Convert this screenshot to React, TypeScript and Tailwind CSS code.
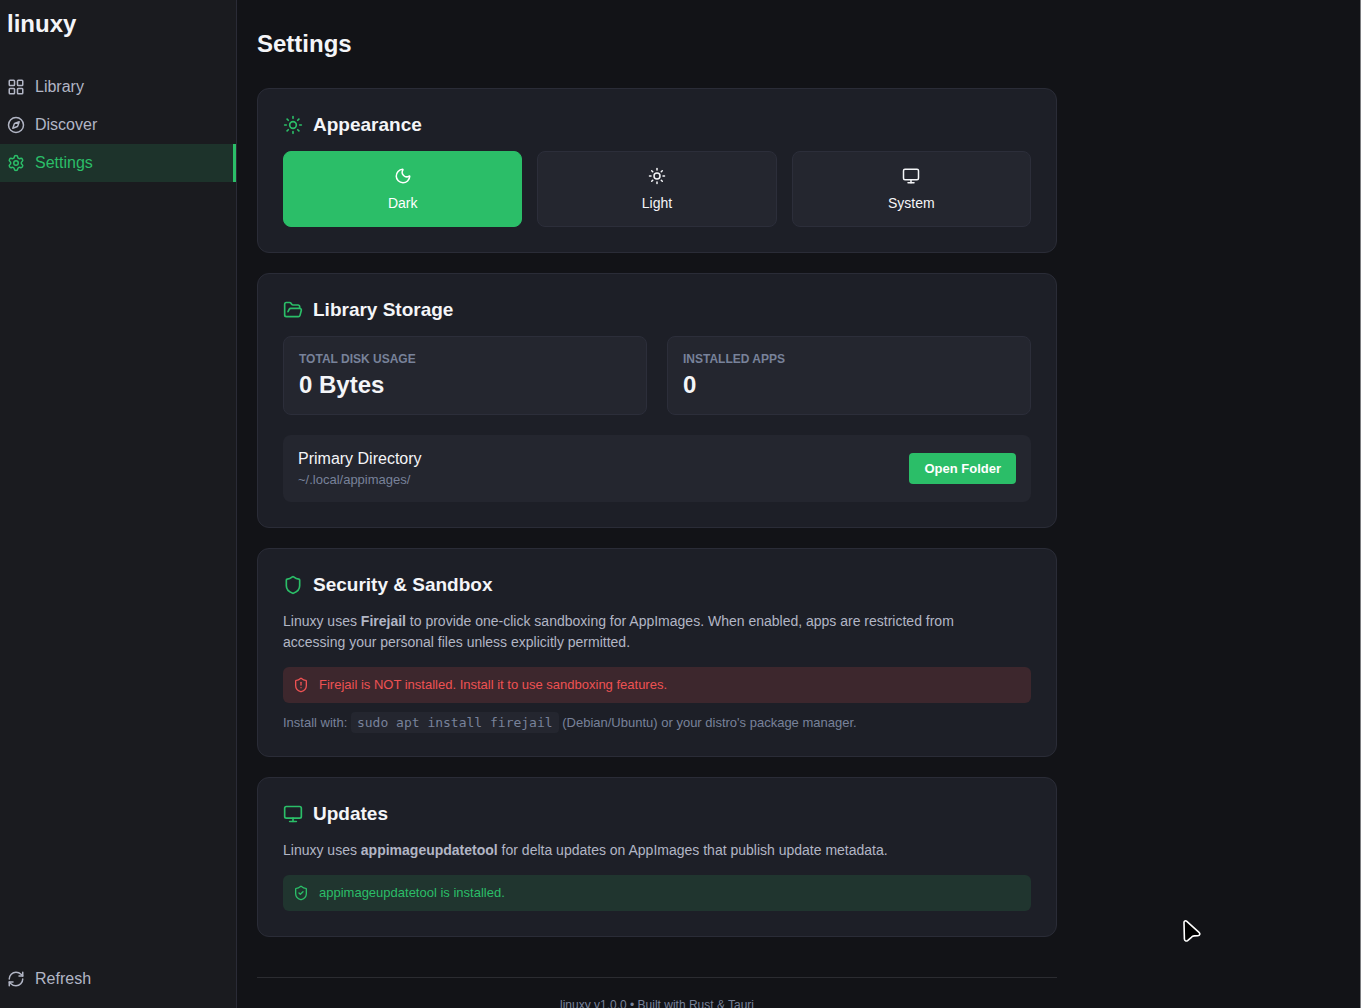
import React, { useState } from 'react';
import {
  Compass,
  FolderOpen,
  LayoutGrid,
  Monitor,
  Moon,
  RefreshCw,
  Settings,
  Shield,
  ShieldAlert,
  ShieldCheck,
  Sun,
  type LucideIcon,
} from 'lucide-react';

const navItems = [
  { id: 'library', label: 'Library', icon: LayoutGrid },
  { id: 'discover', label: 'Discover', icon: Compass },
  { id: 'settings', label: 'Settings', icon: Settings },
];

const themes = [
  { id: 'dark', label: 'Dark', icon: Moon },
  { id: 'light', label: 'Light', icon: Sun },
  { id: 'system', label: 'System', icon: Monitor },
];

function Sidebar() {
  return (
    <aside className="flex w-[237px] shrink-0 flex-col border-r border-[#2a2b36] bg-[#1a1b1f] py-2.5 leading-[18px]">
      <div className="mb-[30px] px-[7px] text-2xl leading-7 font-bold text-[#f4f5f8]">linuxy</div>
      <nav className="flex flex-1 flex-col">
        {navItems.map(({ id, label, icon: Icon }) => (
          <button
            key={id}
            className={
              id === 'settings'
                ? 'flex h-[38px] items-center gap-2.5 border-r-[3px] border-[#2bbe68] bg-[#1d332b] px-[7px] text-[#2bbe68]'
                : 'flex h-[38px] items-center gap-2.5 px-[7px] text-[#b2b6c5]'
            }
          >
            <Icon size={18} />
            {label}
          </button>
        ))}
      </nav>
      <button className="flex h-[38px] items-center gap-2.5 px-[7px] text-[#b2b6c5]">
        <RefreshCw size={18} />
        Refresh
      </button>
    </aside>
  );
}

function Card({ icon: Icon, title, children }: { icon: LucideIcon; title: string; children: React.ReactNode }) {
  return (
    <section className="mb-5 rounded-xl border border-[#2a2c37] bg-[#1d1f27] p-[25px]">
      <h2 className="mb-[15px] flex h-[22px] items-center gap-2.5 text-[19px] leading-[22px] font-bold text-[#f4f5f8]">
        <Icon size={20} className="text-[#2bbe68]" />
        {title}
      </h2>
      {children}
    </section>
  );
}

function Stat({ label, value }: { label: string; value: string }) {
  return (
    <div className="rounded-lg border border-[#2c2e3a] bg-[#24262f] p-[15px]">
      <div className="mb-[5px] text-xs leading-[14px] font-bold text-[#78829a] uppercase">{label}</div>
      <div className="text-2xl leading-7 font-bold text-[#f4f5f8]">{value}</div>
    </div>
  );
}

function App() {
  const [theme, setTheme] = useState('dark');

  return (
    <div className="flex h-screen overflow-hidden border-r border-[#7c7d80] bg-[#121317] font-['Liberation_Sans',Arial,sans-serif] text-base text-[#f4f5f8]">
      <Sidebar />

      <main className="min-w-0 flex-1 overflow-y-auto px-5 py-[30px] [scrollbar-width:none]">
        <div className="max-w-[800px]">
          <h1 className="mb-[30px] text-2xl leading-7 font-bold">Settings</h1>

          <Card icon={Sun} title="Appearance">
            <div className="grid grid-cols-3 gap-[15px]">
              {themes.map(({ id, label, icon: Icon }) => (
                <button
                  key={id}
                  aria-pressed={theme === id}
                  onClick={() => setTheme(id)}
                  className={
                    theme === id
                      ? 'flex flex-col items-center gap-2.5 rounded-lg border border-[#2bbe68] bg-[#2bbe68] p-[15px] text-sm leading-4 text-white'
                      : 'flex flex-col items-center gap-2.5 rounded-lg border border-[#2c2e3a] bg-[#24262f] p-[15px] text-sm leading-4'
                  }
                >
                  <Icon size={18} />
                  {label}
                </button>
              ))}
            </div>
          </Card>

          <Card icon={FolderOpen} title="Library Storage">
            <div className="mb-5 grid grid-cols-2 gap-5">
              <Stat label="Total Disk Usage" value="0 Bytes" />
              <Stat label="Installed Apps" value="0" />
            </div>
            <div className="flex items-center justify-between rounded-lg bg-[#24262f] p-[15px]">
              <div>
                <div className="mb-1 leading-[18px]">Primary Directory</div>
                <div className="text-[13px] leading-[15px] text-[#78829a]">~/.local/appimages/</div>
              </div>
              <button className="rounded bg-[#2bbe68] px-[15px] py-2 text-[13px] leading-[15px] font-bold text-white">
                Open Folder
              </button>
            </div>
          </Card>

          <Card icon={Shield} title="Security &amp; Sandbox">
            <p className="mb-3.5 max-w-[720px] text-sm leading-[21px] text-[#b2b6c5]">
              Linuxy uses <strong>Firejail</strong> to provide one-click sandboxing for AppImages. When enabled, apps
              are restricted from accessing your personal files unless explicitly permitted.
            </p>
            <div className="flex items-center gap-2.5 rounded-md bg-[#3d272d] p-2.5 text-[13px] leading-4 text-[#ee5253]">
              <ShieldAlert size={16} />
              Firejail is NOT installed. Install it to use sandboxing features.
            </div>
            <p className="mt-3 text-[13px] leading-4 text-[#78829a]">
              Install with:{' '}
              <code className="rounded bg-[#24262f] px-1.5 py-[3px] font-['DejaVu_Sans_Mono',monospace]">
                sudo apt install firejail
              </code>{' '}
              (Debian/Ubuntu) or your distro's package manager.
            </p>
          </Card>

          <Card icon={Monitor} title="Updates">
            <p className="mb-3.5 text-sm leading-[21px] text-[#b2b6c5]">
              Linuxy uses <strong>appimageupdatetool</strong> for delta updates on AppImages that publish update
              metadata.
            </p>
            <div className="flex items-center gap-2.5 rounded-md bg-[#20352f] p-2.5 text-[13px] leading-4 text-[#2bbe68]">
              <ShieldCheck size={16} />
              appimageupdatetool is installed.
            </div>
          </Card>

          <footer className="mt-10 border-t border-[#2b2c31] pt-5 text-center text-xs leading-[14px] text-[#78829a]">
            linuxy v1.0.0 • Built with Rust &amp; Tauri
          </footer>
        </div>
      </main>

      {/* Mouse pointer */}
      <svg
        className="pointer-events-none absolute top-[919px] left-[1182px]"
        width="20"
        height="24"
        viewBox="0 0 20 24"
        fill="#000"
        stroke="#fff"
        strokeWidth="1.6"
        strokeLinejoin="round"
      >
        <path d="M2 3.5C2 1.8 3.6 1.3 4.8 2.4L17 13.3C18.6 14.8 17.8 16.6 15.8 16.7L12.2 16.9C11 17 10.2 17.4 9.4 18.3L5.6 21.6C4.2 22.6 2.5 21.8 2.4 20Z" />
      </svg>
    </div>
  );
}

export default App;
